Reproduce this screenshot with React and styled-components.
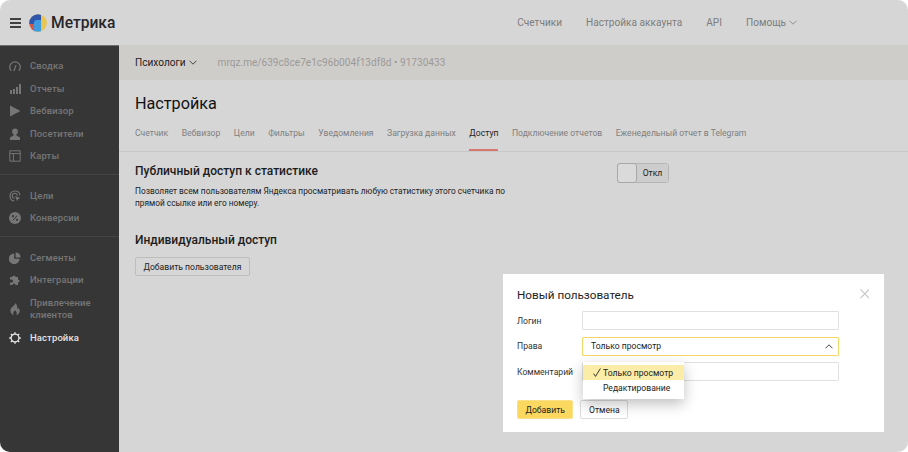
import React from "react";
import styled, { createGlobalStyle } from "styled-components";

const GlobalStyle = createGlobalStyle`
  html, body {
    margin: 0;
    padding: 0;
    background: #fff;
  }
  * {
    box-sizing: border-box;
  }
`;

const Frame = styled.div`
  position: relative;
  width: 908px;
  height: 452px;
  overflow: hidden;
  border-radius: 10px;
  background: #d6d6d6;
  color: #111;
  font-family: Roboto, "Noto Sans", sans-serif;
`;

const Header = styled.header`
  display: flex;
  align-items: center;
  justify-content: space-between;
  height: 45px;
  padding: 0 111px 0 10px;
`;

const Brand = styled.div`
  display: flex;
  align-items: center;
`;

const Burger = styled.svg`
  width: 11px;
  height: 10px;
  margin-right: 8px;
`;

const Logo = styled.svg`
  width: 18px;
  height: 18px;
  margin-right: 4px;
`;

const BrandName = styled.span`
  font-size: 15.6px;
  font-weight: 500;
  color: #26262b;
`;

const TopNav = styled.nav`
  display: flex;
  align-items: center;
  gap: 24px;
  font-size: 10.1px;
  color: #7d7d7d;
`;

const Caret = styled.svg`
  width: 8px;
  height: 5px;
  margin-left: 3px;
  transform: ${(p) => (p.$up ? "rotate(180deg)" : "none")};
`;

const NavItem = styled.span`
  display: flex;
  align-items: center;
`;

const Body = styled.div`
  display: flex;
  height: 407px;
`;

const Sidebar = styled.aside`
  flex: none;
  width: 119px;
  padding-top: 9px;
  background: #363636;
  border-top: 1px solid #6e6e6e;
`;

const SideGroup = styled.div`
  padding-bottom: 6.5px;
  margin-bottom: 9.5px;
  border-bottom: ${(p) => (p.$last ? "none" : "1px solid #444")};
`;

const SideItem = styled.div`
  display: flex;
  align-items: center;
  min-height: 22.5px;
  padding: ${(p) => (p.$tall ? "5.75px" : "0")} 0 ${(p) => (p.$tall ? "5.75px" : "0")} 9px;
  font-size: 9.5px;
  font-weight: 500;
  line-height: 12px;
  letter-spacing: 0.1px;
  color: ${(p) => (p.$active ? "#e4e4e4" : "#767676")};

  svg {
    flex: none;
    width: 12px;
    height: 12px;
    margin-right: 9px;
  }
`;

const Main = styled.main`
  flex: 1;
  min-width: 0;
`;

const CounterBar = styled.div`
  display: flex;
  align-items: center;
  height: 35px;
  padding-left: 16px;
  background: #cfcdca;
  font-size: 10.1px;
`;

const CounterName = styled.span`
  display: flex;
  align-items: center;
  margin-right: 21px;
  color: #1c1c1c;
`;

const CounterUrl = styled.span`
  color: #9b9a98;
`;

const PageTitle = styled.h1`
  margin: 15px 0 0 16px;
  font-size: 16.2px;
  line-height: 18px;
  font-weight: 400;
`;

const Tabs = styled.div`
  display: flex;
  gap: 13.5px;
  height: 29px;
  margin-top: 10px;
  padding-left: 16px;
  border-bottom: 1px solid #c8c8c8;
  font-size: 8.6px;
  color: #7f7f7f;
`;

const Tab = styled.span`
  height: 28px;
  padding-top: 5px;
  color: ${(p) => (p.$active ? "#222" : "#7f7f7f")};
  border-bottom: 2px solid ${(p) => (p.$active ? "#d8786f" : "transparent")};
`;

const Section = styled.section`
  position: relative;
  padding: 11px 16px 0;
  width: 520px;
`;

const SectionTitle = styled.h2`
  margin: 0;
  font-size: 12px;
  line-height: 16px;
  font-weight: 500;
  color: #1c1c1c;
`;

const SectionText = styled.p`
  margin: 6px 0 23px;
  width: 385px;
  font-size: 8.32px;
  line-height: 12px;
  color: #222;
`;

const Button = styled.button`
  height: 19px;
  padding: 0 7.5px;
  border: 1px solid ${(p) => p.$border || "#bdbdbd"};
  border-radius: 2px;
  background: ${(p) => p.$bg || "transparent"};
  font-family: inherit;
  font-size: 8.6px;
  color: #222;
`;

const AddUser = styled(Button)`
  margin-top: 9px;
`;

const Switch = styled.div`
  position: absolute;
  top: 163px;
  left: 617px;
  display: flex;
  width: 52px;
  height: 20px;
  border: 1px solid #b5b5b5;
  border-radius: 3px;
  font-size: 8.6px;
  color: #222;
`;

const Knob = styled.span`
  width: 20px;
  margin: -1px 0 -1px -1px;
  border: 1px solid #a8a8a8;
  border-radius: 3px;
  background: #dadada;
`;

const SwitchLabel = styled.span`
  flex: 1;
  line-height: 18px;
  text-align: center;
  background: #cdcdcd;
`;

const Modal = styled.div`
  position: absolute;
  top: 274px;
  left: 503px;
  width: 381px;
  height: 158px;
  padding: 14px 14px 0;
  background: #fff;
`;

const ModalTitle = styled.div`
  font-size: 11.7px;
  line-height: 15px;
  color: #1d1d1d;
  margin-bottom: 8px;
`;

const Close = styled.svg`
  position: absolute;
  top: 15px;
  right: 15px;
  width: 9.5px;
  height: 9.5px;
`;

const FormRow = styled.div`
  display: flex;
  align-items: center;
  height: 19px;
  margin-bottom: ${(p) => p.$mb ?? 6.5}px;
  font-size: 8.6px;
  color: #333;
`;

const FieldLabel = styled.span`
  width: 65px;
`;

const Field = styled.div`
  position: relative;
  display: flex;
  align-items: center;
  justify-content: space-between;
  width: 257px;
  height: 19px;
  padding: 0 5px 0 8px;
  border: 1px solid ${(p) => (p.$focus ? "#f5d766" : "#e0e0e0")};
  border-radius: 1px;
  color: #222;
`;

const Dropdown = styled.div`
  position: absolute;
  top: 88px;
  left: 80px;
  width: 101px;
  height: 37px;
  padding-top: 3px;
  background: #fff;
  box-shadow: 0 5px 14px rgba(0, 0, 0, 0.25);
  font-size: 8.6px;
  color: #222;
`;

const Option = styled.div`
  position: relative;
  display: flex;
  align-items: center;
  height: ${(p) => (p.$selected ? 15 : 16)}px;
  padding-left: 20px;
  background: ${(p) => (p.$selected ? "#fbeca8" : "transparent")};
`;

const Tick = styled.svg`
  position: absolute;
  left: 10px;
  top: 3px;
  width: 8px;
  height: 9px;
`;

const Actions = styled.div`
  display: flex;
  gap: 7px;
  margin-top: 19px;
`;

const Chevron = ({ color = "#777", up }) => (
  <Caret $up={up} viewBox="0 0 8 5" fill="none" stroke={color} strokeWidth="0.9">
    <path d="M.5.7 4 4.2 7.5.7" />
  </Caret>
);

const Icons = {
  gauge: (
    <svg viewBox="0 0 12 12" fill="none" stroke="#767676" strokeWidth="1.3">
      <path d="M2.2 10.8a5.3 5.3 0 1 1 7.6 0" />
      <path d="M4.8 11 7 5.2" />
    </svg>
  ),
  bars: (
    <svg viewBox="0 0 12 12" fill="#767676">
      <path d="M1 7h2v4H1zM4 6h2v5H4zM7 4h2v7H7zM10 1h2v10h-2z" />
    </svg>
  ),
  play: (
    <svg viewBox="0 0 12 12" fill="#767676">
      <path d="M1 .5 11.5 6 1 11.5z" />
    </svg>
  ),
  person: (
    <svg viewBox="0 0 12 12" fill="#767676">
      <circle cx="6" cy="3.4" r="2.9" />
      <path d="M4.6 6h2.8v1.6L11 9.4V12H1V9.4l3.6-1.8z" />
    </svg>
  ),
  map: (
    <svg viewBox="0 0 12 12" fill="none" stroke="#767676" strokeWidth="1">
      <path d="M.8.8h10.4v10.4H.8zM.8 3.6h10.4M4.4 3.6v7.6" />
    </svg>
  ),
  target: (
    <svg viewBox="0 0 12 12" fill="none" stroke="#767676" strokeWidth="1.1">
      <path d="M5.2 11A5 5 0 1 1 11 5.4" />
      <path d="M5.6 8.2a2.5 2.5 0 1 1 2.6-2.7" />
      <path d="M6 6l5.4 2-2.2 1-1 2.2z" fill="#767676" stroke="none" />
    </svg>
  ),
  percent: (
    <svg viewBox="0 0 12 12">
      <circle cx="6" cy="6" r="6" fill="#767676" />
      <path d="M8.2 3.6 3.8 8.4" stroke="#363636" strokeWidth="1" />
      <circle cx="4" cy="4.2" r="1.1" fill="#363636" />
      <circle cx="8" cy="7.8" r="1.1" fill="#363636" />
    </svg>
  ),
  pie: (
    <svg viewBox="0 0 12 12" fill="#767676">
      <path d="M5.2 1.4v5.4h5.4A5.4 5.4 0 1 1 5.2 1.4z" />
      <path d="M6.6.4A5 5 0 0 1 11.6 5.4h-5z" />
    </svg>
  ),
  puzzle: (
    <svg viewBox="0 0 12 12" fill="#767676">
      <path d="M1 3h2.4a1.6 1.6 0 1 1 3.2 0H9v2.4a1.5 1.5 0 1 1 0 3V11H6.6a1.6 1.6 0 0 0-3.2 0H1V8.6h1.5a1.5 1.5 0 0 0 0-3H1z" />
    </svg>
  ),
  flame: (
    <svg viewBox="0 0 12 12" fill="#767676">
      <path d="M6.2 0c.5 2-3.9 3.9-4.7 6.5C1 9.2 3 12 4.7 12c-1-1.5-.5-3.2 1.3-4.7 1.6 1.4 2.3 3.2 1.3 4.7 2 0 3.8-2.5 3.3-5-.2-1-.8-2-1.4-2.6-.1 1-.5 1.5-1 1.7C8.5 4 8 1.5 6.2 0z" />
    </svg>
  ),
  gear: (
    <svg viewBox="0 0 12 12" fill="none" stroke="#e4e4e4">
      <circle cx="6" cy="6" r="3.9" strokeWidth="1.3" />
      <path
        d="M6 .2V2M6 10v1.8M.2 6H2M10 6h1.8M1.9 1.9l1.3 1.3M8.800 8.800l1.300 1.300M1.900 10.100l1.300-1.300M8.800 3.200l1.300-1.300"
        strokeWidth="1.4"
      />
    </svg>
  ),
};

const groups = [
  [
    ["Сводка", "gauge"],
    ["Отчеты", "bars"],
    ["Вебвизор", "play"],
    ["Посетители", "person"],
    ["Карты", "map"],
  ],
  [
    ["Цели", "target"],
    ["Конверсии", "percent"],
  ],
  [
    ["Сегменты", "pie"],
    ["Интеграции", "puzzle"],
    ["Привлечение клиентов", "flame"],
    ["Настройка", "gear"],
  ],
];

const tabs = [
  "Счетчик",
  "Вебвизор",
  "Цели",
  "Фильтры",
  "Уведомления",
  "Загрузка данных",
  "Доступ",
  "Подключение отчетов",
  "Еженедельный отчет в Telegram",
];

export default function App() {
  return (
    <Frame>
      <GlobalStyle />
      <Header>
        <Brand>
          <Burger viewBox="0 0 11 10" stroke="#111" strokeWidth="1.3">
            <path d="M0 1h11M0 5h11M0 9h11" />
          </Burger>
          <Logo viewBox="0 0 18 18">
            <clipPath id="logo-disc">
              <circle cx="9" cy="9" r="8.8" />
            </clipPath>
            <g clipPath="url(#logo-disc)">
              <rect width="18" height="18" fill="#eac54f" />
              <rect width="12" height="10" fill="#2f55ad" />
              <rect y="10" width="6" height="8" fill="#d2574a" />
              <path d="M5 9a3 3 0 0 1 3-3h4v12H5z" fill="#3f9be0" />
            </g>
          </Logo>
          <BrandName>Метрика</BrandName>
        </Brand>
        <TopNav>
          <span>Счетчики</span>
          <span>Настройка аккаунта</span>
          <span>API</span>
          <NavItem>
            Помощь
            <Chevron color="#8a8a8a" />
          </NavItem>
        </TopNav>
      </Header>

      <Body>
        <Sidebar>
          {groups.map((items, i) => (
            <SideGroup key={i} $last={i === groups.length - 1}>
              {items.map(([label, icon]) => (
                <SideItem
                  key={label}
                  $active={label === "Настройка"}
                  $tall={label === "Привлечение клиентов"}
                >
                  {Icons[icon]}
                  <span>{label}</span>
                </SideItem>
              ))}
            </SideGroup>
          ))}
        </Sidebar>

        <Main>
          <CounterBar>
            <CounterName>
              Психологи
              <Chevron color="#333" />
            </CounterName>
            <CounterUrl>mrqz.me/639c8ce7e1c96b004f13df8d • 91730433</CounterUrl>
          </CounterBar>
          <PageTitle>Настройка</PageTitle>
          <Tabs>
            {tabs.map((tab) => (
              <Tab key={tab} $active={tab === "Доступ"}>
                {tab}
              </Tab>
            ))}
          </Tabs>
          <Section>
            <SectionTitle>Публичный доступ к статистике</SectionTitle>
            <SectionText>
              Позволяет всем пользователям Яндекса просматривать любую статистику этого
              счетчика по прямой ссылке или его номеру.
            </SectionText>
            <SectionTitle>Индивидуальный доступ</SectionTitle>
            <AddUser>Добавить пользователя</AddUser>
          </Section>
        </Main>
      </Body>

      <Switch>
        <Knob />
        <SwitchLabel>Откл</SwitchLabel>
      </Switch>

      <Modal>
        <ModalTitle>Новый пользователь</ModalTitle>
        <Close viewBox="0 0 10 10" stroke="#c4c4c4" strokeWidth="1.1">
          <path d="M.5.5l9 9M9.5.5l-9 9" />
        </Close>
        <FormRow>
          <FieldLabel>Логин</FieldLabel>
          <Field />
        </FormRow>
        <FormRow>
          <FieldLabel>Права</FieldLabel>
          <Field $focus>
            Только просмотр
            <Chevron color="#333" up />
          </Field>
        </FormRow>
        <FormRow $mb={0}>
          <FieldLabel>Комментарий</FieldLabel>
          <Field />
        </FormRow>
        <Actions>
          <Button $bg="#fbd960" $border="#fbe08a">
            Добавить
          </Button>
          <Button $border="#dcdcdc">Отмена</Button>
        </Actions>
        <Dropdown>
          <Option $selected>
            <Tick viewBox="0 0 8 9" fill="none" stroke="#222" strokeWidth="0.9">
              <path d="M.6 5.6 2.5 8.4 7.4.5" />
            </Tick>
            Только просмотр
          </Option>
          <Option>Редактирование</Option>
        </Dropdown>
      </Modal>
    </Frame>
  );
}
